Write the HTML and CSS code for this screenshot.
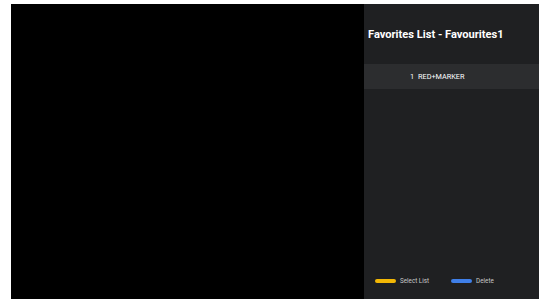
FILE: index.html
```html
<!DOCTYPE html>
<html lang="en">
  <head>
    <meta charset="UTF-8" />
    <title>Favorites List</title>
    <link rel="stylesheet" href="styles.css">
  </head>
  <body>
    <div class="screen">
      <div class="video"></div>
      <div class="panel">
        <div class="panel-header">
          <div class="title">Favorites List - Favourites1</div>
        </div>
        <div class="channel-list">
          <div class="channel-row selected">
            <span class="channel-num">1</span>
            <span class="channel-name">RED+MARKER</span>
          </div>
        </div>
        <div class="hints">
          <div class="hint">
            <span class="pill yellow"></span>
            <span class="hint-label">Select List</span>
          </div>
          <div class="hint">
            <span class="pill blue"></span>
            <span class="hint-label">Delete</span>
          </div>
        </div>
      </div>
    </div>
  </body>
</html>
```

FILE: styles.css
```css
:root {
  --panel-bg: #1f2022;
  --row-bg: #2c2d2f;
  --text-color: #ffffff;
  --hint-color: #c8c8c8;
  --yellow: #f2b705;
  --blue: #3f7fe8;
}

* {
  margin: 0;
  padding: 0;
  box-sizing: border-box;
}

body {
  background-color: #ffffff;
  font-family: Roboto, "Liberation Sans", sans-serif;
  padding: 4px 0 0 11px;
  overflow: hidden;
}

.screen {
  width: 528px;
  height: 297px;
  display: flex;
}

.video {
  flex: 0 0 353px;
  background-color: #000000;
}

.panel {
  flex: 1;
  background-color: var(--panel-bg);
  display: flex;
  flex-direction: column;
}

.panel-header {
  height: 60px;
  padding: 24px 0 0 4px;
}

.title {
  font-size: 11.1px;
  font-weight: 700;
  color: var(--text-color);
}

.channel-list {
  flex: 1;
}

.channel-row {
  height: 25px;
  display: flex;
  align-items: center;
  padding-left: 46px;
  font-size: 7.3px;
  color: var(--text-color);
}

.channel-row.selected {
  background-color: var(--row-bg);
}

.channel-num {
  width: 8px;
}

.hints {
  height: 34px;
  display: flex;
  align-items: center;
  padding: 0 0 6px 11px;
  gap: 22px;
}

.hint {
  display: flex;
  align-items: center;
  gap: 4px;
}

.pill {
  width: 21px;
  height: 4px;
  border-radius: 2px;
}

.pill.yellow {
  background-color: var(--yellow);
}

.pill.blue {
  background-color: var(--blue);
}

.hint-label {
  font-size: 6.3px;
  color: var(--hint-color);
}
```
